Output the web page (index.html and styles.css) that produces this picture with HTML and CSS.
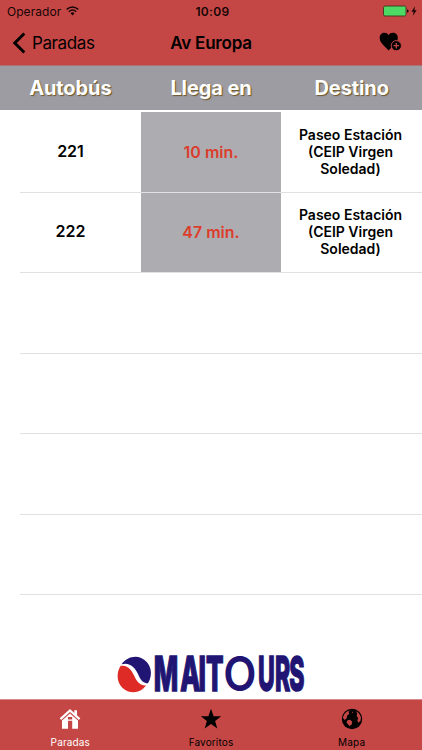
FILE: index.html
```html
<!DOCTYPE html>
<html lang="es">
<head>
<meta charset="utf-8">
<title>Av Europa</title>
<link rel="stylesheet" href="styles.css">
</head>
<body>
<div class="app">
  <header class="top">
    <div class="status">
      <div class="carrier"><span class="operator">Operador</span>
        <svg class="wifi" width="13" height="10" viewBox="0 0 13 10"><g fill="none" stroke="#160505" stroke-width="1.5"><path d="M.7 3.4Q6.5-1.5 12.3 3.4"/><path d="M2.8 5.7Q6.5 2.4 10.2 5.7"/></g><path d="M4.5 7.2Q6.5 5.5 8.5 7.2L6.5 9.4Z" fill="#160505"/></svg>
      </div>
      <time>10:09</time>
      <div class="power">
        <svg width="36" height="12" viewBox="0 0 36 12"><rect x="1.5" y="1" width="22.5" height="10" rx="1.5" fill="#4cd964" stroke="#42321f" stroke-width=".9"/><path d="M25 4.3Q26.7 4.7 26.7 6T25 7.8Z" fill="#160505"/><path d="M33 1.2L29.5 6.7H31.7L30.8 10.7L34.7 5.2H32.4Z" fill="#160505"/></svg>
      </div>
    </div>
    <div class="nav">
      <div class="back"><svg width="14" height="22" viewBox="0 0 14 22"><path d="M13.3 1.5L3.8 11L13.3 20.5" fill="none" stroke="#000" stroke-width="3"/></svg><span>Paradas</span></div>
      <h1>Av Europa</h1>
      <div class="favourite"><svg width="24" height="20" viewBox="0 0 24 20"><path d="M9.6 18.5C6 14.6 .7 11 .7 5.8C.7.2 7.3-.7 9.6 3.2C12-.7 18.8.1 18.8 5.8C18.8 10.5 13.2 14.7 9.6 18.5Z"/><circle cx="17.3" cy="13.7" r="5.1" stroke="#c54745" stroke-width="1"/><path d="M14.5 13.7H20.1M17.3 10.9V16.5" stroke="#c54745" stroke-width="1.3"/></svg></div>
    </div>
  </header>
  <div class="columns"><span>Autobús</span><span>Llega en</span><span>Destino</span></div>
  <main class="list">
    <div class="row"><strong class="bus">221</strong><strong class="wait">10 min.</strong><strong class="dest">Paseo Estación<br>(CEIP Virgen<br>Soledad)</strong></div>
    <div class="row"><strong class="bus">222</strong><strong class="wait">47 min.</strong><strong class="dest">Paseo Estación<br>(CEIP Virgen<br>Soledad)</strong></div>
    <div class="row"></div>
    <div class="row"></div>
    <div class="row"></div>
    <div class="row"></div>
  </main>
  <div class="brand">
    <svg width="188" height="40" viewBox="0 0 188 40">
      <path d="M4.5 9.2C9.5 2.7 17.3 0 24.2 3C34 7.3 36.7 19 31 28.2C27.5 28.4 24 25.8 22 21.2C18.6 12.2 12.5 6.8 4.5 9.2Z" fill="#211573"/>
      <path d="M3.7 10.8C11.4 9.7 15.5 16.2 18.4 23.3C20.6 27.8 24.8 31.3 29.2 30.3C23.5 38.5 12.6 39.5 5.3 32.7C-.6 27.1-.6 17 3.7 10.8Z" fill="#df2b25"/>
      <g class="wordmark"><text class="narrow" transform="translate(0 36.4) scale(.54 1)" x="68 117 151 165">MAIT</text><text class="round" transform="translate(106.2 36.2) scale(.9 1)">O</text><text class="narrow" transform="translate(0 36.4) scale(.48 1)" x="294 329 359">URS</text></g>
    </svg>
  </div>
  <nav class="tabs">
    <a class="tab active"><svg width="22" height="22" viewBox="0 0 22 22"><path d="M11 1L.7 10.3L2.1 11.9L11 4L19.9 11.9L21.3 10.3L18 7.3V2.2H15.3V4.9Z"/><path fill-rule="evenodd" d="M11 5.4L3 12.5V20.7H9V12.8H13.2V20.7H19V12.5ZM9 8.9H13.2V11.4H9Z"/></svg><span>Paradas</span></a>
    <a class="tab"><svg width="22" height="22" viewBox="0 0 22 22"><path d="M11 .8L13.6 8.2L21.2 8.3L15.1 13L17.3 20.6L11 16.1L4.7 20.6L6.9 13L.8 8.3L8.4 8.2Z"/></svg><span>Favoritos</span></a>
    <a class="tab"><svg width="22" height="22" viewBox="0 0 22 22"><circle cx="11" cy="11" r="10.2"/><g fill="#c54745"><path d="M8.8 2.2C5 3.3 2.4 6.3 2 10L3.6 11.9L5.7 10.2L6.2 7.6L8.4 5.8L7.5 4Z"/><path d="M6.5 12.2L9.2 11.8L11.2 13.8L10.7 16.6L8.4 18L6.8 16L5.5 14.3Z"/><path d="M14.8 2.9C17.5 4.3 19.4 6.4 19.9 9.5L19.6 12.8L17.4 14.8L16.3 12.5L17.3 10L15.6 8L16.2 5.5Z"/><path d="M10.6 4.1L12.1 3.7L11.7 5.3Z"/></g></svg><span>Mapa</span></a>
  </nav>
</div>
</body>
</html>
```
FILE: styles.css
```css
* { box-sizing: border-box; }
body { margin: 0; background: #fff; color: #000; font-family: Inter, "Liberation Sans", sans-serif; }
svg { display: block; flex: none; overflow: visible; }
.app { width: 422px; height: 750px; display: flex; flex-direction: column; }
.top { height: 66px; flex: none; background: #c54745; border-bottom: 1px solid #a97478; }
.status { height: 22px; display: grid; grid-template-columns: 1fr auto 1fr; align-items: center; padding: 0 4px 0 7px; color: #160505; }
.carrier { display: flex; align-items: center; gap: 5px; font-size: 12px; letter-spacing: .05px; }
.status time { font-size: 12px; font-weight: 600; letter-spacing: .35px; }
.power { justify-self: end; }
.nav { height: 43px; display: grid; grid-template-columns: 1fr auto 1fr; align-items: center; padding: 0 19px 0 11px; }
.nav h1 { margin: -1px 0 0 8px; font-size: 17px; line-height: 20px; font-weight: 600; letter-spacing: -.2px; }
.back { display: flex; align-items: center; gap: 7px; font-size: 17px; letter-spacing: -.4px; margin-top: -1px; }
.favourite { justify-self: end; margin-top: -4px; }
.columns { height: 44px; flex: none; display: grid; grid-template-columns: repeat(3, 1fr); align-items: center; text-align: center; background: #9d9ca3; color: #fff; font-size: 20px; font-weight: 700; letter-spacing: -.1px; text-shadow: 1px 1px 1px #6d5526; }
.list { padding-top: 2px; height: 545px; flex: none; }
.row { height: 80.5px; display: grid; grid-template-columns: 141px 140px 141px; align-items: center; text-align: center; background: linear-gradient(#e1e1e4, #e1e1e4) 20px 100% / 402px 1px no-repeat; }
.bus { font-size: 16px; font-weight: 600; margin-top: -3px; }
.wait { height: 79.5px; align-self: start; display: grid; place-items: center; background: #adacb1; color: #dc3d2c; font-size: 16px; font-weight: 600; }
.dest { font-size: 14px; line-height: 17px; font-weight: 600; margin: -2px 2px 0 0; }
.brand { height: 44px; flex: none; display: flex; justify-content: center; }
.wordmark { fill: #211573; font-family: Inter, "Liberation Sans", sans-serif; font-size: 48px; }
.narrow { font-weight: 800; stroke: #211573; stroke-width: 1.6px; }
.round { font-weight: 600; }
.tabs { height: 51px; flex: none; display: grid; grid-template-columns: repeat(3, 1fr); background: #c54745; border-top: 1px solid #d78b8b; }
.tab { display: flex; flex-direction: column; align-items: center; padding-top: 8px; gap: 6px; font-size: 10px; line-height: 12px; letter-spacing: .15px; }
.tab svg { fill: currentColor; }
.active { color: #fff; }
```
